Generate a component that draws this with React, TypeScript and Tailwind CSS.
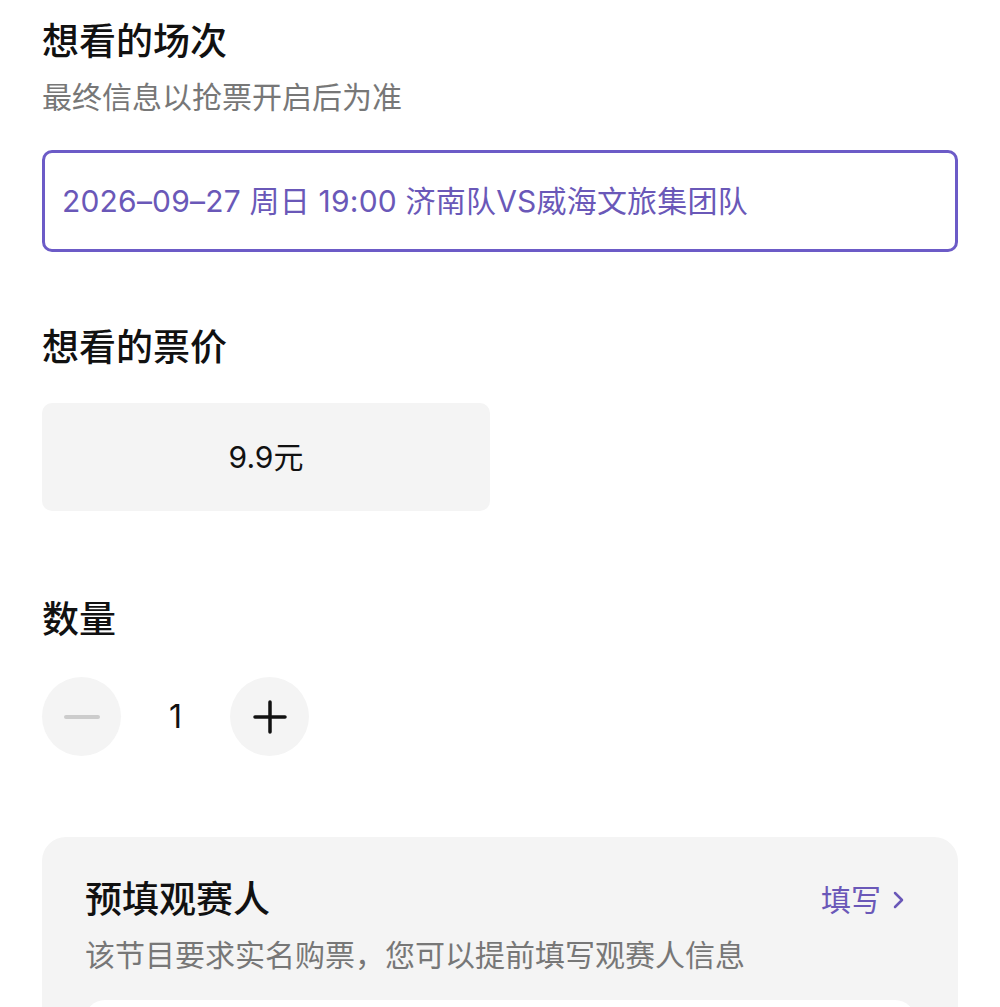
import React from "react";

const font = { fontFamily: '"Inter", "Noto Sans CJK SC", "Noto Sans", sans-serif' };

export default function App() {
  return (
    <div className="w-[1000px] h-[1007px] overflow-hidden bg-white" style={font}>
      <div className="px-[42px] pt-[20px]">
        <div className="text-[37px] leading-[44px] font-medium text-[#111]">想看的场次</div>
        <div className="mt-[13px] text-[30px] leading-[40px] text-[#777]">最终信息以抢票开启后为准</div>
        <div className="mt-[33px] h-[102px] rounded-[10px] border-[3px] border-[#6c5bc7] flex items-center px-[17px]">
          <span className="text-[30px] leading-[40px] tracking-[0.2px] text-[#6a58b8]">2026–09–27 周日 19:00 济南队VS威海文旅集团队</span>
        </div>
        <div className="mt-[74px] text-[37px] leading-[44px] font-medium text-[#111]">想看的票价</div>
        <div className="mt-[33px] w-[448px] h-[108px] rounded-[10px] bg-[#f4f4f4] flex items-center justify-center">
          <span className="text-[30px] leading-[40px] text-[#111]">9.9元</span>
        </div>
        <div className="mt-[87px] text-[37px] leading-[44px] font-medium text-[#111]">数量</div>
        <div className="mt-[35px] flex items-center">
          <div className="w-[79px] h-[79px] rounded-full bg-[#f4f4f4] flex items-center justify-center">
            <div className="w-[36px] h-[4px] rounded-full bg-[#cccccc]" />
          </div>
          <div className="w-[109px] text-center text-[32px] leading-[40px] text-[#111]">1</div>
          <div className="w-[79px] h-[79px] rounded-full bg-[#f4f4f4] flex items-center justify-center">
            <svg width="36" height="36" viewBox="0 0 36 36">
              <path d="M18 3v30M3 18h30" stroke="#111" strokeWidth="3.5" strokeLinecap="round" />
            </svg>
          </div>
        </div>
        <div className="mt-[81px] rounded-[24px] bg-[#f4f4f4] px-[43px] pt-[41px] h-[300px]">
          <div className="flex items-center justify-between">
            <div className="text-[37px] leading-[44px] font-medium text-[#111]">预填观赛人</div>
            <div className="flex items-center text-[30px] leading-[44px] text-[#6a58b8] mr-[10px]">
              <span>填写</span>
              <svg className="ml-[12px]" width="12" height="20" viewBox="0 0 12 20">
                <path d="M2 3l7 7-7 7" fill="none" stroke="#6a58b8" strokeWidth="2.5" strokeLinecap="round" strokeLinejoin="round" />
              </svg>
            </div>
          </div>
          <div className="mt-[13px] text-[30px] leading-[40px] text-[#777]">该节目要求实名购票，您可以提前填写观赛人信息</div>
          <div className="mt-[25px] h-[120px] rounded-[20px] bg-white" />
        </div>
      </div>
    </div>
  );
}
